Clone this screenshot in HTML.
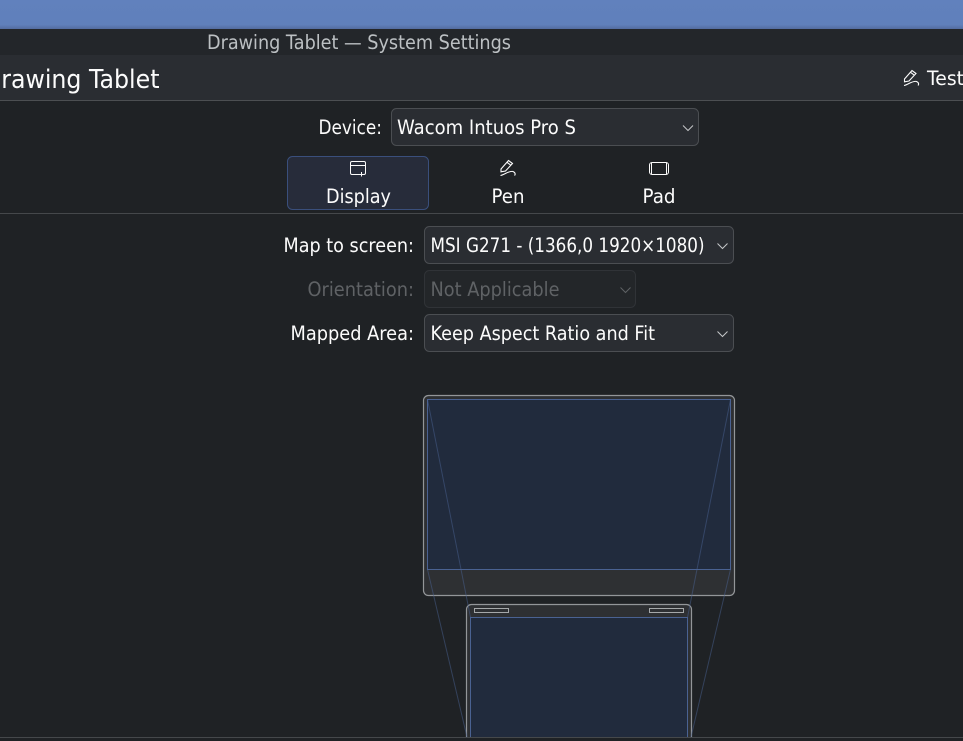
<!DOCTYPE html>
<html><head><meta charset="utf-8"><style>
html,body{margin:0;padding:0;background:#1f2225;width:963px;height:741px;overflow:hidden}
svg{display:block}
text{font-family:"DejaVu Sans","Liberation Sans",sans-serif;fill:#fcfcfc;font-size:19.5px}
</style></head><body>
<svg width="963" height="741" viewBox="0 0 963 741" xmlns="http://www.w3.org/2000/svg">
<defs>
<linearGradient id="band" x1="0" y1="0" x2="0" y2="1"><stop offset="0" stop-color="#6181bd"/><stop offset=".85" stop-color="#6080bb"/><stop offset="1" stop-color="#536c9f"/></linearGradient>
<clipPath id="c"><rect x="0" y="0" width="963" height="737"/></clipPath>
</defs>
<rect width="963" height="29" fill="url(#band)"/>
<rect y="29" width="963" height="26" fill="#23262a"/>
<rect y="55" width="963" height="45" fill="#2a2d32"/>
<rect y="100" width="963" height="1" fill="#4c4f52"/>
<rect y="213" width="963" height="1" fill="#45484b"/>
<rect y="737" width="963" height="4" fill="#1f2225"/>
<rect y="737" width="963" height="1" fill="#45484b"/>

<text x="207" y="49" textLength="304" lengthAdjust="spacingAndGlyphs" style="fill:#bcc0c3">Drawing Tablet — System Settings</text>
<text x="-17" y="88" textLength="176.500" lengthAdjust="spacingAndGlyphs" style="font-size:25.500px">Drawing Tablet</text>

<g fill="none" stroke="#fcfcfc" stroke-width="1.100" transform="translate(903.500,70)">
<path d="M1 9L8.500 .5L12.500 3.500L5.500 11L1 11.800Z"/><path d="M7 2.300L11 5.300"/><path d="M.5 15.500C4 15 9 10.500 13 11.500C15.500 12.500 15.500 14.500 14.500 15.500"/></g>
<text x="927" y="85" textLength="37" lengthAdjust="spacingAndGlyphs">Test</text>

<text x="318.500" y="134" textLength="63.500" lengthAdjust="spacingAndGlyphs">Device:</text>
<rect x="391.500" y="108.500" width="307" height="37" rx="5" fill="#2a2d32" stroke="#4b4e52"/>
<text x="397" y="134" textLength="179" lengthAdjust="spacingAndGlyphs">Wacom Intuos Pro S</text>
<path d="M683 125.500L688 130.500L693 125.500" fill="none" stroke="#c5c7c9" stroke-width="1"/>

<rect x="287.500" y="156.500" width="141" height="53" rx="5" fill="#272c3a" stroke="#3a4f7c"/>
<g fill="none" stroke="#fcfcfc" stroke-width="1">
<rect x="350.500" y="161.500" width="15" height="13" rx="1.500"/><path d="M350.500 165.500H365.500"/><path d="M361.500 172V176.500M360 174.500H363.500" stroke-width="1"/>
</g>
<g fill="none" stroke="#fcfcfc" stroke-width="1.100" transform="translate(500,160)">
<path d="M1 9L8.500 .5L12.500 3.500L5.500 11L1 11.800Z"/><path d="M7 2.300L11 5.300"/><path d="M.5 15.500C4 15 9 10.500 13 11.500C15.500 12.500 15.500 14.500 14.500 15.500"/></g>
<rect x="649.500" y="162.500" width="19" height="12" rx="2.500" fill="none" stroke="#fcfcfc"/>
<path d="M651.500 162.500V174.500M666.500 162.500V174.500" stroke="#fcfcfc" fill="none"/>
<text x="326" y="203" textLength="65" lengthAdjust="spacingAndGlyphs">Display</text>
<text x="491.500" y="203" textLength="33" lengthAdjust="spacingAndGlyphs">Pen</text>
<text x="642.500" y="203" textLength="33" lengthAdjust="spacingAndGlyphs">Pad</text>

<text x="283.500" y="252" textLength="130.500" lengthAdjust="spacingAndGlyphs">Map to screen:</text>
<rect x="424.500" y="226.500" width="309" height="37" rx="5" fill="#2a2d32" stroke="#4b4e52"/>
<text x="430.500" y="252" textLength="274" lengthAdjust="spacingAndGlyphs">MSI G271 - (1366,0 1920×1080)</text>
<path d="M717.500 243.500L722.500 248.500L727.500 243.500" fill="none" stroke="#c5c7c9"/>

<text x="307.500" y="296" textLength="106.500" lengthAdjust="spacingAndGlyphs" style="fill:#5f6265">Orientation:</text>
<rect x="424.500" y="270.500" width="211" height="37" rx="5" fill="#232629" stroke="#303337"/>
<text x="430.500" y="296" textLength="129" lengthAdjust="spacingAndGlyphs" style="fill:#5f6265">Not Applicable</text>
<path d="M620.500 287.500L625.500 292.500L630.500 287.500" fill="none" stroke="#5f6265"/>

<text x="290.500" y="340" textLength="123.500" lengthAdjust="spacingAndGlyphs">Mapped Area:</text>
<rect x="424.500" y="314.500" width="309" height="37" rx="5" fill="#2a2d32" stroke="#4b4e52"/>
<text x="430.500" y="340" textLength="224.500" lengthAdjust="spacingAndGlyphs">Keep Aspect Ratio and Fit</text>
<path d="M717.500 331.500L722.500 336.500L727.500 331.500" fill="none" stroke="#c5c7c9"/>

<g clip-path="url(#c)">
<rect x="423.500" y="395.500" width="311" height="200" rx="5" fill="#2e3033" stroke="#939699" stroke-width="1.200"/>
<rect x="427.500" y="399.500" width="303" height="170" fill="#212b3d" stroke="#4a6292"/>
<rect x="466.500" y="604.500" width="225" height="160" rx="5" fill="#2e3033" stroke="#939699" stroke-width="1.200"/>
<rect x="470.500" y="617.500" width="217" height="140" fill="#212b3d" stroke="#4a6292"/>
<rect x="474.500" y="608.500" width="34" height="4" fill="#2e3033" stroke="#a5a8aa"/>
<rect x="649.500" y="608.500" width="34" height="4" fill="#2e3033" stroke="#a5a8aa"/>
<g stroke="#4a6292" stroke-opacity=".5" fill="none">
<path d="M427.500 399.500L470.500 617.500"/><path d="M730.500 399.500L687.500 617.500"/>
<path d="M427.500 569.500L467 737"/><path d="M730.500 569.500L691 737"/>
</g>
</g>
</svg>
</body></html>
